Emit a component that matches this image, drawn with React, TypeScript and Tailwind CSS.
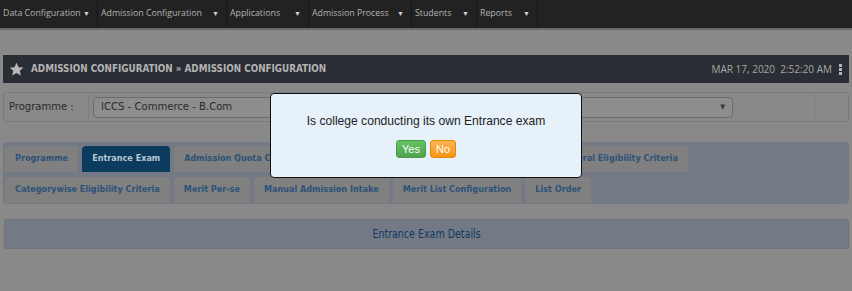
import React from 'react';

const navItems = [
  { label: 'Data Configuration', w: 'w-[98px]' },
  { label: 'Admission Configuration', w: 'w-[129px]' },
  { label: 'Applications', w: 'w-[82px]' },
  { label: 'Admission Process', w: 'w-[103px]' },
  { label: 'Students', w: 'w-[65px]' },
  { label: 'Reports', w: 'w-[61px]' },
];

const row1 = ['Programme', 'Entrance Exam', 'Admission Quota Configuration', 'Categorywise Reservation Configuration', 'General Eligibility Criteria'];
const row2 = ['Categorywise Eligibility Criteria', 'Merit Per-se', 'Manual Admission Intake', 'Merit List Configuration', 'List Order'];

function Tab({ label, active }: { label: string; active?: boolean }) {
  return (
    <div
      className={
        'h-[26px] px-[10px] flex items-center rounded-t-[4px] text-[9px] font-bold whitespace-nowrap ' +
        (active ? 'bg-[#0b3c5d] text-[#b9c6d2]' : 'bg-[#808080] text-[#2d5277]')
      }
    >
      {label}
    </div>
  );
}

export default function App() {
  return (
    <div className="relative w-[852px] h-[291px] bg-[#898989] overflow-hidden font-['Liberation_Sans',sans-serif]">
      {/* top menu */}
      <div className="h-[28px] bg-[#222222] flex font-['Open_Sans',sans-serif] text-[8.8px] text-[#b3b3b3]">
        {navItems.map((n) => (
          <div key={n.label} className={n.w + ' h-full flex items-center pl-[3px] pr-[7px] border-r border-[#171717] whitespace-nowrap'}>
            {n.label}
            <span className="ml-auto text-[7px] text-[#d0d0d0]">▼</span>
          </div>
        ))}
      </div>
      <div className="h-[2px] bg-[#6a6a6a]" />

      <div className="px-[3px] pt-[25px]">
        {/* title bar */}
        <div className="h-[28px] bg-[#2a2d33] flex items-center pl-[6px] pr-[7px]">
          <svg width="15" height="15" viewBox="0 0 24 24" className="fill-[#b8b8b8]">
            <path d="M12 1l3.3 7.2 7.7.7-5.8 5.1 1.8 7.6L12 17.7l-7 3.9 1.8-7.6L1 9l7.7-.7z" />
          </svg>
          <span className="ml-[7px] text-[9.8px] font-bold text-[#b3b3b3] font-['DejaVu_Sans_Condensed','DejaVu_Sans',sans-serif]">
            ADMISSION CONFIGURATION » ADMISSION CONFIGURATION
          </span>
          <span className="ml-auto text-[10px] text-[#a8a8a8] font-['Open_Sans',sans-serif] whitespace-pre">MAR 17, 2020  2:52:20 AM</span>
          <div className="ml-[7px] flex flex-col gap-[1px]">
            <span className="w-[3px] h-[3px] bg-[#b3b3b3]" />
            <span className="w-[3px] h-[3px] bg-[#b3b3b3]" />
            <span className="w-[3px] h-[3px] bg-[#b3b3b3]" />
          </div>
        </div>

        {/* programme row */}
        <div className="mt-[9px] h-[30px] border border-[#7b7b7b] rounded-[3px] flex">
          <div className="w-[85px] border-r border-[#7e7e7e] pl-[5px] pt-[6px] text-[10px] text-[#2a2a2a] font-['DejaVu_Sans',sans-serif]">
            Programme :
          </div>
          <div className="w-[726px] border-r border-[#7e7e7e] pl-[4px] pr-[81px] flex items-center">
            <div className="h-[21px] w-full border border-[#6c6c6c] rounded-[4px] bg-[#8d8d8d] flex items-center pl-[7px] pr-[7px] text-[11.2px] text-[#2b2b2b] font-['DejaVu_Sans_Condensed','DejaVu_Sans',sans-serif]">
              ICCS - Commerce - B.Com
              <span className="ml-auto text-[7px] text-[#3a3a3a]">▼</span>
            </div>
          </div>
        </div>

        {/* tabs */}
        <div className="mt-[20px] bg-[#737a86] rounded-[4px] px-[2px] pt-[4px] pb-[1px] flex flex-col gap-[5px] font-['DejaVu_Sans_Condensed','DejaVu_Sans',sans-serif]">
          <div className="flex gap-[4px]">
            {row1.map((t) => (
              <Tab key={t} label={t} active={t === 'Entrance Exam'} />
            ))}
          </div>
          <div className="flex gap-[4px]">
            {row2.map((t) => (
              <Tab key={t} label={t} />
            ))}
          </div>
        </div>

        {/* details */}
        <div className="mt-[15px] ml-[1px] h-[30px] bg-[#737a86] border border-[#6d7380] rounded-[2px] flex items-center justify-center text-[12px] text-[#12385f] font-['DejaVu_Sans_Condensed',sans-serif]">
          <span className="inline-block scale-x-[0.88]">Entrance Exam Details</span>
        </div>
      </div>

      {/* confirm dialog */}
      <div className="absolute left-[270px] top-[93px] w-[312px] h-[85px] bg-[#e7f1fa] border border-[#111] rounded-[4px] flex flex-col items-center pt-[18px]">
        <div className="text-[12.1px] text-[#222] font-['Liberation_Sans',sans-serif]">Is college conducting its own Entrance exam</div>
        <div className="mt-[10px] flex gap-[4px] text-[11px] text-white">
          <button className="h-[18px] px-[5px] rounded-[3px] bg-gradient-to-b from-[#62c462] to-[#51a351] border border-[#4a9a4a]">Yes</button>
          <button className="h-[18px] px-[5px] rounded-[3px] bg-gradient-to-b from-[#fbb450] to-[#f89406] border border-[#e0890a]">No</button>
        </div>
      </div>
    </div>
  );
}
